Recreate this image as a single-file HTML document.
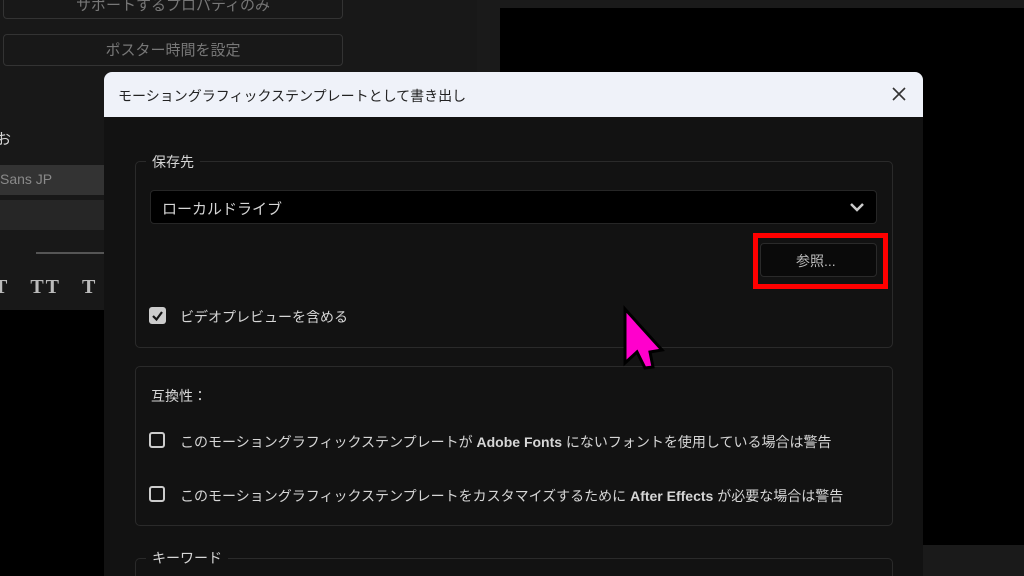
<!DOCTYPE html>
<html style="width:1024px;height:576px;overflow:hidden"><head><meta charset="utf-8"><style>
*{margin:0;padding:0;box-sizing:border-box}
body{width:1024px;height:576px;overflow:hidden;background:#000;position:relative;font-family:"Liberation Sans","Noto Sans CJK JP",sans-serif;color:#ccc}
.a{position:absolute}
.btn{border:1px solid #333;border-radius:4px;color:#777;font-size:15px;text-align:center}
.box{border:1px solid #2a2a2a;border-radius:5px}
.t{font-size:14px;color:#d6d6d6;white-space:nowrap}
.cb{width:16px;height:16px;border:2px solid #ccc;border-radius:3px}
</style></head><body>
<div class="a" style="left:0;top:0;width:1024px;height:576px;overflow:hidden">
<div class="a" style="left:0;top:0;width:477px;height:310px;background:#181818"></div>
<div class="a" style="left:477px;top:0;width:547px;height:8px;background:#1a1a1a"></div>
<div class="a" style="left:477px;top:0;width:23px;height:545px;background:#1a1a1a"></div>
<div class="a" style="left:923px;top:545px;width:101px;height:31px;background:#1a1a1a"></div>
<div class="a btn" style="left:3px;top:-12px;width:340px;height:31px;line-height:34px">サポートするプロパティのみ</div>
<div class="a btn" style="left:3px;top:34px;width:340px;height:32px;line-height:31px">ポスター時間を設定</div>
<div class="a t" style="left:-4px;top:128px;font-size:15px">お</div>
<div class="a" style="left:0;top:165px;width:105px;height:30px;background:#333"></div>
<div class="a t" style="left:0;top:171px;color:#8a8a8a">Sans JP</div>
<div class="a" style="left:0;top:200px;width:105px;height:30px;background:#262626"></div>
<div class="a" style="left:36px;top:252px;width:70px;height:2px;background:#555"></div>
<div class="a" style="left:-6px;top:276px;font:bold 20px 'Liberation Serif',serif;color:#bbb;letter-spacing:2px">T&nbsp;&nbsp;&nbsp;TT&nbsp;&nbsp;&nbsp;T</div>

<div class="a" style="left:104px;top:72px;width:819px;height:504px;background:#121212;border-radius:8px 8px 0 0;overflow:hidden">
 <div class="a" style="left:0;top:0;width:819px;height:45px;background:#eff2f9"></div>
 <div class="a" style="left:14px;top:14px;font-size:14px;color:#222;white-space:nowrap">モーショングラフィックステンプレートとして書き出し</div>
 <svg class="a" style="left:787px;top:14px" width="16" height="16"><path d="M2 2L14 14M14 2L2 14" stroke="#333" stroke-width="1.6"/></svg>
</div>

<div class="a box" style="left:135px;top:161px;width:758px;height:187px"></div>
<div class="a t" style="left:146px;top:152px;background:#121212;padding:0 6px">保存先</div>
<div class="a" style="left:150px;top:190px;width:727px;height:34px;background:#000;border:1px solid #262626;border-radius:4px"></div>
<div class="a t" style="left:162px;top:198px;font-size:15px">ローカルドライブ</div>
<svg class="a" style="left:849px;top:201px" width="16" height="12"><path d="M2 3L8 9L14 3" stroke="#ccc" stroke-width="2.5" fill="none"/></svg>
<div class="a" style="left:760px;top:243px;width:117px;height:34px;background:#0a0a0a;border:1px solid #2a2a2a;border-radius:4px"></div>
<div class="a t" style="left:796px;top:251px;color:#bbb">参照...</div>
<div class="a" style="left:753px;top:233px;width:135px;height:56px;border:5px solid #ff0000"></div>
<div class="a" style="left:149px;top:307px;width:17px;height:17px;background:#ccc;border-radius:3px"></div>
<svg class="a" style="left:149px;top:307px" width="17" height="17"><path d="M4 9L7.5 12.5L13 5" stroke="#121212" stroke-width="2.2" fill="none"/></svg>
<div class="a t" style="left:180px;top:307px">ビデオプレビューを含める</div>

<div class="a box" style="left:135px;top:366px;width:758px;height:160px"></div>
<div class="a t" style="left:151px;top:386px">互換性：</div>
<div class="a cb" style="left:149px;top:432px"></div>
<div class="a t" style="left:180px;top:432px">このモーショングラフィックステンプレートが <b>Adobe Fonts</b> にないフォントを使用している場合は警告</div>
<div class="a cb" style="left:149px;top:486px"></div>
<div class="a t" style="left:180px;top:486px">このモーショングラフィックステンプレートをカスタマイズするために <b>After Effects</b> が必要な場合は警告</div>
<div class="a box" style="left:135px;top:558px;width:758px;height:30px"></div>
<div class="a t" style="left:146px;top:548px;background:#121212;padding:0 6px">キーワード</div>

<svg class="a" style="left:615px;top:300px" width="60" height="75"><path d="M10 9L10 63L22 52L30 68L38 67L35 52L47 50Z" fill="#ff00cc" stroke="#000" stroke-width="3" stroke-linejoin="miter"/></svg>
</div>
</body></html>
